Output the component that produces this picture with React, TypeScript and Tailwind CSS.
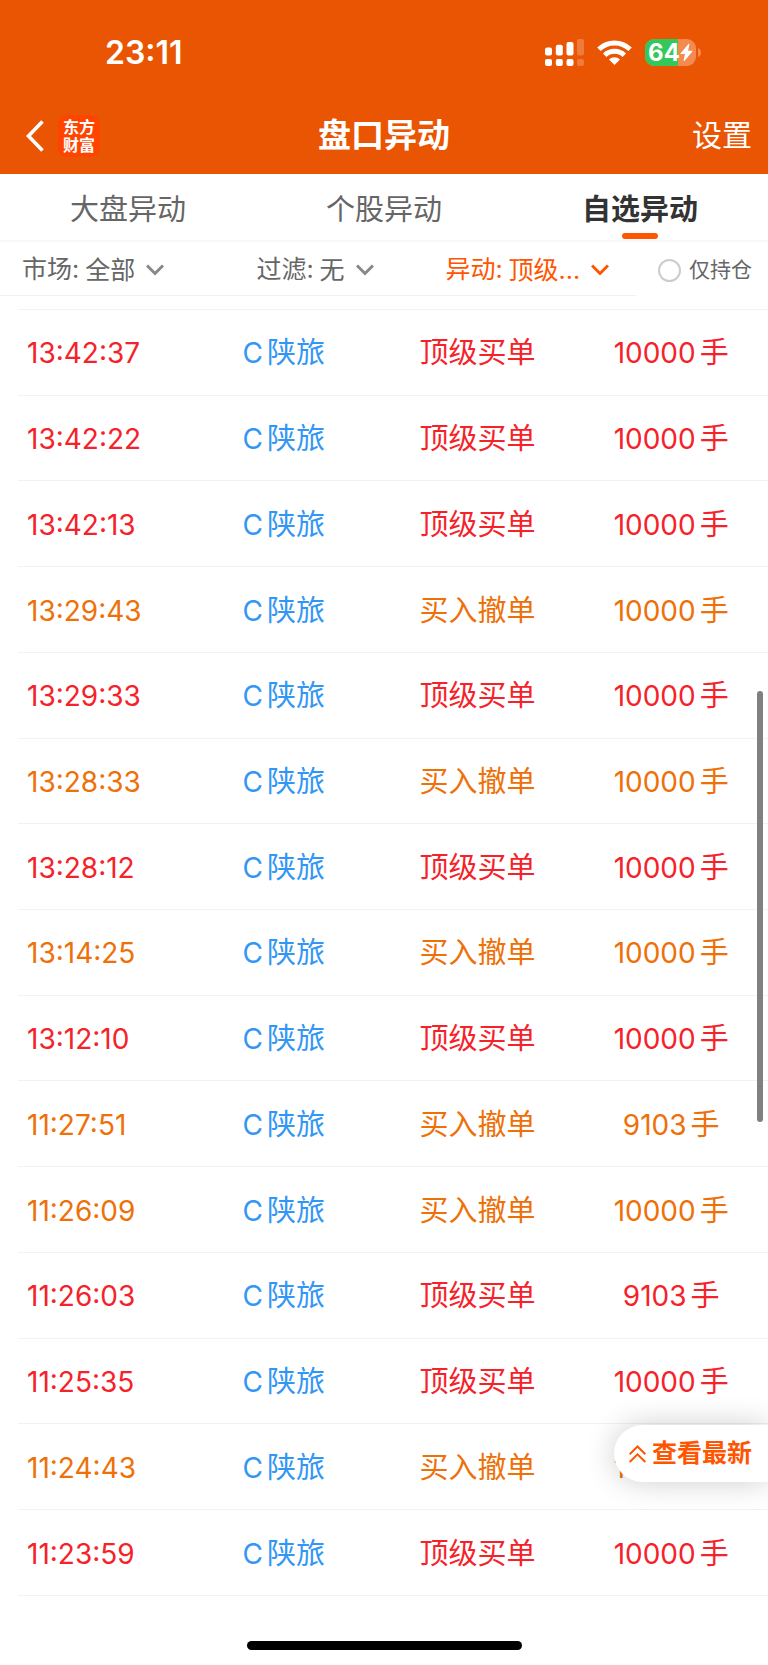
import type { ReactNode } from "react"
import clsx from "clsx"

type Kind = "buy" | "cancel"

type Movement = {
  time: string
  kind: Kind
  volume: number
}

const movements: Movement[] = [
  { time: "13:42:37", kind: "buy", volume: 10000 },
  { time: "13:42:22", kind: "buy", volume: 10000 },
  { time: "13:42:13", kind: "buy", volume: 10000 },
  { time: "13:29:43", kind: "cancel", volume: 10000 },
  { time: "13:29:33", kind: "buy", volume: 10000 },
  { time: "13:28:33", kind: "cancel", volume: 10000 },
  { time: "13:28:12", kind: "buy", volume: 10000 },
  { time: "13:14:25", kind: "cancel", volume: 10000 },
  { time: "13:12:10", kind: "buy", volume: 10000 },
  { time: "11:27:51", kind: "cancel", volume: 9103 },
  { time: "11:26:09", kind: "cancel", volume: 10000 },
  { time: "11:26:03", kind: "buy", volume: 9103 },
  { time: "11:25:35", kind: "buy", volume: 10000 },
  { time: "11:24:43", kind: "cancel", volume: 10000 },
  { time: "11:23:59", kind: "buy", volume: 10000 },
]

const kindLabel: Record<Kind, string> = {
  buy: "顶级买单",
  cancel: "买入撤单",
}

const tabs = ["大盘异动", "个股异动", "自选异动"]

export default function App() {
  return (
    <div className="relative flex min-h-screen flex-col overflow-hidden bg-white font-['Inter','Noto_Sans_CJK_SC',sans-serif] text-[#666]">
      <header className="bg-[#ea5504] text-white">
        <StatusBar />
        <NavBar />
      </header>
      <TabBar active="自选异动" />
      <FilterBar />
      <MovementList />
      <footer className="flex h-[69px] items-end justify-center pb-[15px]">
        <div className="h-[9px] w-[275px] rounded-full bg-black" />
      </footer>
      <button className="absolute bottom-[183px] right-0 flex h-[57px] items-center gap-1.5 rounded-l-full bg-white pl-[15px] pr-4 text-[25px] font-bold text-[#ff5500] shadow-[0_0_30px_rgba(0,0,0,0.2)]">
        <DoubleUpIcon />
        查看最新
      </button>
    </div>
  )
}

function StatusBar() {
  return (
    <div className="flex h-[97px] items-center justify-between pl-[105px] pr-[67px] pt-2">
      <span className="text-[32px] font-semibold leading-none">23:11</span>
      <div className="flex items-center">
        <SignalIcon />
        <WifiIcon />
        <Battery level={64} />
      </div>
    </div>
  )
}

function NavBar() {
  return (
    <nav className="grid h-[77px] grid-cols-3 items-center px-4">
      <div className="flex items-center gap-3.5 pl-2.5">
        <button aria-label="返回">
          <svg className="block h-[32px] w-[18px]" viewBox="0 0 18 32" fill="none" stroke="currentColor" strokeWidth="3.6">
            <path d="M16.500 1.500 2.500 16 16.500 30.500" />
          </svg>
        </button>
        <div className="grid size-[42px] place-content-center rounded-[9px] bg-[#ff4400] text-center text-[16px] font-bold leading-[18px]">
          <span>东方</span>
          <span>财富</span>
        </div>
      </div>
      <h1 className="text-center text-[33px] font-bold">盘口异动</h1>
      <button className="justify-self-end text-[30px]">设置</button>
    </nav>
  )
}

function TabBar({ active }: { active: string }) {
  return (
    <div role="tablist" className="grid h-[68px] grid-cols-3 border-b-2 border-[#f7f7f7]">
      {tabs.map((tab) => (
        <button
          key={tab}
          role="tab"
          aria-selected={tab === active}
          className={clsx("relative pt-1.5 text-[29px]", tab === active && "font-bold text-[#333]")}
        >
          {tab}
          {tab === active && <span className="absolute bottom-px left-1/2 h-1.5 w-9 -translate-x-1/2 rounded-full bg-[#ff5500]" />}
        </button>
      ))}
    </div>
  )
}

function FilterBar() {
  return (
    <div className="flex h-[54px]">
      <div className="grid flex-1 grid-cols-3 border-b border-[#f0f0f0] pt-0.5">
        <Filter id="market" label="市场:" value="全部" className="pl-[22px]" />
        <Filter id="filter" label="过滤:" value="无" className="justify-center pr-1.5" />
        <Filter id="movement" label="异动:" value="顶级..." className="justify-center pr-1.5 text-[#ff5500]" highlighted />
      </div>
      <label className="flex w-[132px] items-center justify-end gap-2 pr-4 pt-0.5 text-[21px]">
        <input type="checkbox" className="size-[23px] appearance-none rounded-full border-2 border-[#ccc]" />
        仅持仓
      </label>
    </div>
  )
}

function Filter({
  id,
  label,
  value,
  className,
  highlighted,
}: {
  id: string
  label: string
  value: string
  className?: string
  highlighted?: boolean
}) {
  return (
    <div className={clsx("flex items-center whitespace-nowrap text-[25px]", className)}>
      <label htmlFor={id} className="mr-1.5">
        {label}
      </label>
      <select id={id} defaultValue={value} className="mr-2.5 appearance-none bg-transparent leading-8 outline-none">
        <option value={value}>{value}</option>
      </select>
      <svg
        className={clsx("h-3 w-[18px]", highlighted ? "text-[#ff5500]" : "text-[#888]")}
        viewBox="0 0 18 12"
        fill="none"
        stroke="currentColor"
        strokeWidth="3"
      >
        <path d="M1 1.500 9 9.500 17 1.500" />
      </svg>
    </div>
  )
}

function MovementList() {
  return (
    <main className="relative mt-[13px] grid flex-1 pl-[18px]">
      <table className="w-full table-fixed border-t border-[#f2f2f2] text-[28px]">
        <colgroup>
          <col className="w-[169px]" />
          <col />
          <col />
          <col />
        </colgroup>
        <tbody>
          {movements.map((item) => (
            <tr
              key={item.time}
              className={clsx("border-b border-[#f2f2f2]", item.kind === "buy" ? "text-[#f5222a]" : "text-[#ee7008]")}
            >
              <Cell className="pl-[9px] text-left">{item.time}</Cell>
              <Cell>
                <a href="#stock" className="text-[#3296f5]">
                  C<span className="ml-1 text-[29px]">陕旅</span>
                </a>
              </Cell>
              <Cell>
                <span className="text-[29px]">{kindLabel[item.kind]}</span>
              </Cell>
              <Cell>
                {item.volume}
                <span className="ml-1 text-[29px]">手</span>
              </Cell>
            </tr>
          ))}
        </tbody>
      </table>
      <div className="absolute right-[5px] top-[382px] h-[431px] w-1.5 rounded-full bg-[#808080]" />
    </main>
  )
}

function Cell({ children, className }: { children: ReactNode; className?: string }) {
  return <td className={clsx("whitespace-nowrap pt-0.5 leading-10", className ?? "text-center")}>{children}</td>
}

function Battery({ level }: { level: number }) {
  return (
    <div className="flex items-center gap-0.5">
      <div className="relative flex h-[27px] w-[51px] items-center justify-center overflow-hidden rounded-[9px] bg-[#f38a50]">
        <div className="absolute inset-y-0 left-0 bg-[#34c759]" style={{ width: `${level}%` }} />
        <span className="relative text-[24px] font-bold leading-none">{level}</span>
        <svg className="relative h-[19px] w-[13px]" viewBox="0 0 13 18" fill="currentColor">
          <path d="M8.500.5.6 9.700c-.3.400-.1.800.4.800h4L3.600 17c-.1.600.4.800.8.400l8-9.300c.3-.4.100-.8-.4-.8H8.100L9.400 1c.1-.7-.5-.9-.9-.5Z" />
        </svg>
      </div>
      <svg className="h-[9px] w-[3px] text-[#f38a50]" viewBox="0 0 3 9" fill="currentColor">
        <path d="M0 0c4 1.500 4 7.500 0 9Z" />
      </svg>
    </div>
  )
}

function SignalIcon() {
  return (
    <svg className="h-[27px] w-[39px]" viewBox="0 0 39 27" fill="currentColor">
      <rect x="0" y="8.500" width="7" height="8" rx="2" />
      <rect x="10.800" y="5.800" width="7" height="10.700" rx="2" />
      <rect x="21.500" y="3" width="7" height="13.500" rx="2" />
      <rect x="0" y="20" width="7" height="7" rx="2" />
      <rect x="10.800" y="20" width="7" height="7" rx="2" />
      <rect x="21.500" y="20" width="7" height="7" rx="2" />
      <g opacity=".22">
        <rect x="32" y="0" width="7" height="16.500" rx="2" />
        <rect x="32" y="20" width="7" height="7" rx="2" />
      </g>
    </svg>
  )
}

function WifiIcon() {
  return (
    <svg className="mx-[13px] h-[25px] w-[35px]" viewBox="0 0 35 25" fill="none" stroke="currentColor" strokeWidth="5">
      <path d="M1.900 9.200a22.500 22.500 0 0 1 31.200 0" />
      <path d="M7.700 15.200a14.200 14.200 0 0 1 19.600 0" />
      <path d="M17.500 25 12 19.500a8 8 0 0 1 11 0Z" fill="currentColor" stroke="none" />
    </svg>
  )
}

function DoubleUpIcon() {
  return (
    <svg className="h-[18px] w-[17px]" viewBox="0 0 17 18" fill="none" stroke="currentColor" strokeWidth="2">
      <path d="M.7 9.200 8.500 1.500 16.300 9.200" />
      <path d="M.7 17 8.500 9.300 16.300 17" />
    </svg>
  )
}
